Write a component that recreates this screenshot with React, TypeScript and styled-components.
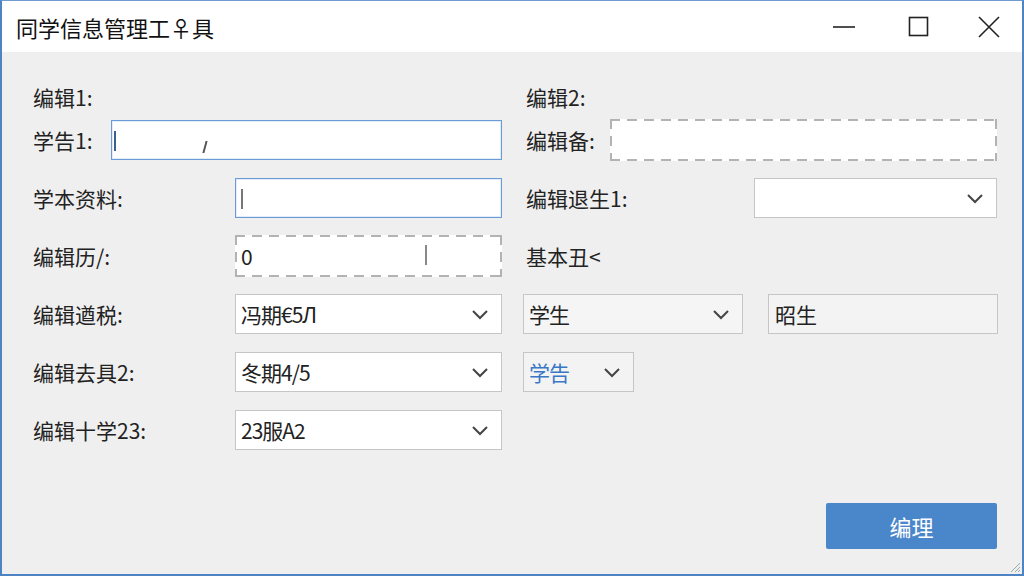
import React from 'react';
import styled, { createGlobalStyle } from 'styled-components';

const GlobalStyle = createGlobalStyle`
  html, body { margin: 0; padding: 0; }
  body {
    width: 1024px;
    height: 576px;
    overflow: hidden;
    font-family: "Noto Sans CJK SC", "Noto Sans", sans-serif;
    background: #f0f0f0;
  }
`;

const dashH = 'repeating-linear-gradient(90deg, #b3b3b3 0 10px, transparent 10px 17px)';
const dashV = 'repeating-linear-gradient(180deg, #b3b3b3 0 10px, transparent 10px 17px)';

const Window = styled.div`
  position: relative;
  box-sizing: border-box;
  width: 1024px;
  height: 576px;
  display: flex;
  flex-direction: column;
  background: #efefef;
  border: 2px solid #4f84c4;
  border-top: 1px solid #6f9bd0;
`;

const TitleBar = styled.div`
  height: 51px;
  flex: none;
  display: flex;
  align-items: center;
  background: #ffffff;
  padding-left: 14px;
`;

const Title = styled.div`
  flex: 1;
  font-size: 22px;
  color: #111;
`;

const WinButton = styled.div<{ $w?: number }>`
  width: ${(p) => p.$w ?? 75}px;
  height: 51px;
  display: flex;
  align-items: center;
  justify-content: center;
`;

const Body = styled.div`
  flex: 1;
  display: flex;
  flex-direction: column;
  padding: 31px 25px 25px 31px;
`;

const Form = styled.div`
  display: flex;
  flex-direction: column;
  gap: 18px;
`;

const Row = styled.div<{ $h?: number; $after?: number }>`
  display: flex;
  height: ${(p) => p.$h ?? 40}px;
  margin-bottom: ${(p) => p.$after ?? 0}px;
  gap: 21px;
`;

const Half = styled.div<{ $w: number; $inset?: number; $gap?: number }>`
  box-sizing: border-box;
  width: ${(p) => p.$w}px;
  flex: none;
  display: flex;
  align-items: center;
  padding-left: ${(p) => p.$inset ?? 0}px;
  gap: ${(p) => p.$gap ?? 0}px;
`;

const Label = styled.div<{ $w?: number }>`
  width: ${(p) => (p.$w ? `${p.$w}px` : 'auto')};
  flex: none;
  font-size: 21px;
  color: #222;
  white-space: nowrap;
`;

const Field = styled.div<{ $w?: number; $variant?: 'focus' | 'dashed' | 'plain' | 'grey'; $h?: number }>`
  position: relative;
  box-sizing: border-box;
  width: ${(p) => (p.$w ? `${p.$w}px` : 'auto')};
  flex: ${(p) => (p.$w ? 'none' : '1')};
  height: ${(p) => p.$h ?? 40}px;
  display: flex;
  align-items: center;
  padding-left: 6px;
  font-size: 21px;
  color: #222;
  background: ${(p) =>
    p.$variant === 'dashed'
      ? `${dashH} top / 100% 2px no-repeat, ${dashH} bottom / 100% 2px no-repeat, ${dashV} left / 2px 100% no-repeat, ${dashV} right / 2px 100% no-repeat, #ffffff`
      : p.$variant === 'grey'
      ? '#f3f3f3'
      : '#ffffff'};
  border: ${(p) =>
    p.$variant === 'focus'
      ? '1px solid #6b9bd6'
      : p.$variant === 'dashed'
      ? 'none'
      : '1px solid #c6c6c6'};
  box-shadow: ${(p) => (p.$variant === 'focus' ? 'inset 0 0 0 1px #e3edf9' : 'none')};
`;

const SelectBox = styled.div<{ $w?: number; $bg?: string; $color?: string }>`
  box-sizing: border-box;
  width: ${(p) => (p.$w ? `${p.$w}px` : 'auto')};
  flex: ${(p) => (p.$w ? 'none' : '1')};
  height: 40px;
  display: flex;
  align-items: center;
  padding: 0 12px 0 5px;
  font-size: 21px;
  color: ${(p) => p.$color ?? '#222'};
  background: ${(p) => p.$bg ?? '#ffffff'};
  border: 1px solid #c6c6c6;
`;

const SelectText = styled.span`
  flex: 1;
  white-space: nowrap;
  letter-spacing: -1px;
`;

const Caret = styled.span<{ $left: number; $color?: string }>`
  position: absolute;
  left: ${(p) => p.$left}px;
  top: 10px;
  width: 2px;
  height: 20px;
  background: ${(p) => p.$color ?? '#555'};
`;

const SlashMark = styled.span`
  position: absolute;
  left: 92px;
  top: 20px;
  width: 2px;
  height: 12px;
  background: #555;
  transform: skewX(-15deg);
`;

const Footer = styled.div`
  margin-top: auto;
  display: flex;
  justify-content: flex-end;
`;

const PrimaryButton = styled.button`
  width: 171px;
  height: 46px;
  border: none;
  border-radius: 2px;
  background: #4a86ca;
  color: #fff;
  font-family: inherit;
  font-size: 22px;
`;

const Grip = styled.svg`
  position: absolute;
  right: 1px;
  bottom: 1px;
`;

const Chevron: React.FC = () => (
  <svg width="18" height="12" viewBox="0 0 18 12">
    <path d="M2 3 L9 10 L16 3" fill="none" stroke="#444" strokeWidth="2" />
  </svg>
);

const Select: React.FC<{ text?: string; w?: number; bg?: string; color?: string }> = ({ text, w, bg, color }) => (
  <SelectBox $w={w} $bg={bg} $color={color}>
    <SelectText>{text}</SelectText>
    <Chevron />
  </SelectBox>
);

const App: React.FC = () => {
  return (
    <>
      <GlobalStyle />
      <Window>
        <TitleBar>
          <Title>同学信息管理工♀具</Title>
          <WinButton>
            <svg width="24" height="24" viewBox="0 0 24 24">
              <line x1="1" y1="12" x2="23" y2="12" stroke="#222" strokeWidth="1.6" />
            </svg>
          </WinButton>
          <WinButton>
            <svg width="22" height="22" viewBox="0 0 22 22">
              <rect x="1.5" y="1.5" width="18" height="18" fill="none" stroke="#222" strokeWidth="1.6" />
            </svg>
          </WinButton>
          <WinButton $w={66}>
            <svg width="22" height="22" viewBox="0 0 22 22">
              <path d="M1 1 L21 21 M21 1 L1 21" stroke="#222" strokeWidth="1.6" />
            </svg>
          </WinButton>
        </TitleBar>
        <Body>
          <Form>
            <Row $h={28} $after={-9}>
              <Half $w={469}>
                <Label>编辑1:</Label>
              </Half>
              <Half $w={474} $inset={3}>
                <Label>编辑2:</Label>
              </Half>
            </Row>
            <Row>
              <Half $w={469}>
                <Label $w={78}>学告1:</Label>
                <Field $variant="focus">
                  <Caret $left={2} $color="#3a5f90" />
                  <SlashMark />
                </Field>
              </Half>
              <Half $w={474} $inset={3}>
                <Label $w={84}>编辑备:</Label>
                <Field $variant="dashed" $h={42} />
              </Half>
            </Row>
            <Row>
              <Half $w={469}>
                <Label $w={202}>学本资料:</Label>
                <Field $variant="focus">
                  <Caret $left={5} $color="#777" />
                </Field>
              </Half>
              <Half $w={474} $inset={3}>
                <Label $w={228}>编辑退生1:</Label>
                <Select />
              </Half>
            </Row>
            <Row>
              <Half $w={469}>
                <Label $w={202}>编辑历/:</Label>
                <Field $variant="dashed" $h={42}>
                  0
                  <Caret $left={190} $color="#888" />
                </Field>
              </Half>
              <Half $w={474} $inset={3}>
                <Label>基本丑&lt;</Label>
              </Half>
            </Row>
            <Row>
              <Half $w={469}>
                <Label $w={202}>编辑遒税:</Label>
                <Select text="冯期€5Л" />
              </Half>
              <Half $w={474} $gap={25}>
                <Select text="学生" w={220} bg="#f5f5f5" />
                <Field $w={230} $variant="grey">昭生</Field>
              </Half>
            </Row>
            <Row>
              <Half $w={469}>
                <Label $w={202}>编辑去具2:</Label>
                <Select text="冬期4/5" />
              </Half>
              <Half $w={474}>
                <Select text="学告" w={111} bg="#f3f3f3" color="#3a78c6" />
              </Half>
            </Row>
            <Row>
              <Half $w={469}>
                <Label $w={202}>编辑十学23:</Label>
                <Select text="23服A2" />
              </Half>
            </Row>
          </Form>
          <Footer>
            <PrimaryButton>编理</PrimaryButton>
          </Footer>
        </Body>
        <Grip width="12" height="12" viewBox="0 0 12 12">
          <path d="M11 2 L2 11 M11 6 L6 11 M11 9 L9 11" stroke="#9aa" strokeWidth="1" />
        </Grip>
      </Window>
    </>
  );
};

export default App;
